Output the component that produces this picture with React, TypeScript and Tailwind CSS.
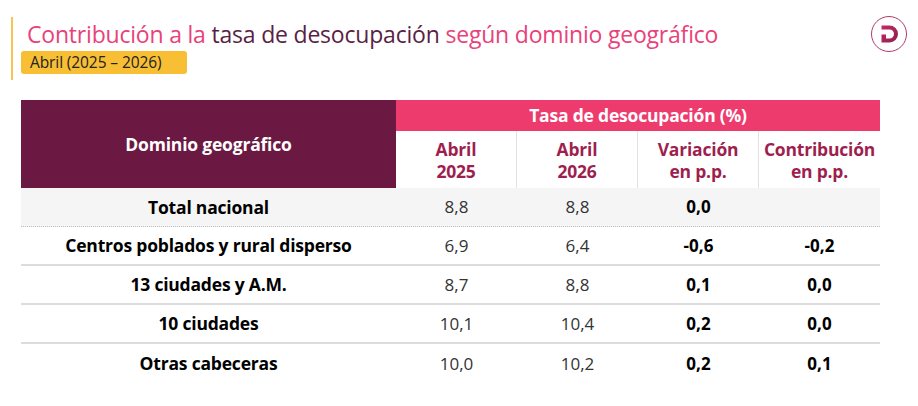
const rows = [
  { label: "Total nacional", a: "8,8", b: "8,8", v: "0,0", c: "", shade: true, border: "border-b border-dotted border-[#bdbdbd]" },
  { label: "Centros poblados y rural disperso", a: "6,9", b: "6,4", v: "-0,6", c: "-0,2", shade: false, border: "border-b-2 border-[#dcdcdc]" },
  { label: "13 ciudades y A.M.", a: "8,7", b: "8,8", v: "0,1", c: "0,0", shade: false, border: "border-b-2 border-[#dcdcdc]" },
  { label: "10 ciudades", a: "10,1", b: "10,4", v: "0,2", c: "0,0", shade: false, border: "border-b-2 border-[#dcdcdc]" },
  { label: "Otras cabeceras", a: "10,0", b: "10,2", v: "0,2", c: "0,1", shade: false, border: "" },
];

function Logo() {
  return (
    <svg width="38" height="38" viewBox="0 0 38 38">
      <defs>
        <linearGradient id="dg" x1="0" y1="0" x2="1" y2="1">
          <stop offset="0" stopColor="#c42a63" />
          <stop offset="1" stopColor="#8e1f52" />
        </linearGradient>
      </defs>
      <circle cx="19" cy="19" r="17.5" fill="white" stroke="#b23a6e" strokeWidth="1" />
      <path
        d="M11.5 10.5 H19.5 A8.5 8.5 0 0 1 19.5 27.5 H11.5 V19.5 H16 V23.5 H19.5 A4.5 4.5 0 0 0 19.5 14.5 H11.5 Z"
        fill="url(#dg)"
      />
    </svg>
  );
}

export default function App() {
  return (
    <div className="w-[918px] h-[406px] bg-white relative" style={{ fontFamily: '"Open Sans", "Noto Sans", sans-serif' }}>
      <div className="flex items-start justify-between pt-[17px] pl-[11px] pr-[10px]">
        <div className="border-l-2 border-[#f6c455] pl-[8px] pb-[6px] pt-[2px]">
          <h1 className="text-[23px] leading-[30px] tracking-[-0.2px] pl-[6px]">
            <span className="text-[#e8427a]">Contribución a la </span>
            <span className="text-[#5a1f45]">tasa de desocupación </span>
            <span className="text-[#e8427a]">según dominio geográfico</span>
          </h1>
          <div className="mt-[2px] inline-block bg-[#f9bf34] rounded-[3px] pl-[9px] h-[23px] w-[166px] text-[15.5px] leading-[23px] tracking-[-0.1px] text-[#222]">
            Abril (2025 – 2026)
          </div>
        </div>
        <div className="mt-[-2px]">
          <Logo />
        </div>
      </div>

      <div className="ml-[21px] mt-[20px] w-[859px]">
        <div className="flex">
          <div className="w-[375px] h-[88px] bg-[#6b1942] text-white font-bold text-[17.5px] tracking-[-0.2px] flex items-center justify-center">
            Dominio geográfico
          </div>
          <div className="flex-1 flex flex-col">
            <div className="h-[31px] bg-[#ee3b6e] text-white font-bold text-[17.5px] tracking-[-0.2px] flex items-center justify-center">
              Tasa de desocupación (%)
            </div>
            <div className="flex h-[57px] text-[#9e1f4f] font-bold text-[17.5px] leading-[22px] tracking-[-0.2px]">
              <div className="w-[121px] flex items-center justify-center text-center border-r border-[#e2e2e2]">Abril<br />2025</div>
              <div className="w-[121px] flex items-center justify-center text-center border-r border-[#e2e2e2]">Abril<br />2026</div>
              <div className="w-[121px] flex items-center justify-center text-center border-r border-[#e2e2e2]">Variación<br />en p.p.</div>
              <div className="flex-1 flex items-center justify-center text-center">Contribución<br />en p.p.</div>
            </div>
          </div>
        </div>
        {rows.map((r) => (
          <div key={r.label} className={`flex h-[39px] items-center text-[17px] ${r.shade ? "bg-[#f5f5f5]" : ""} ${r.border}`}>
            <div className="w-[375px] text-center font-bold text-black tracking-[-0.2px] text-[17.5px]">{r.label}</div>
            <div className="w-[121px] text-center text-[#333]">{r.a}</div>
            <div className="w-[121px] text-center text-[#333]">{r.b}</div>
            <div className="w-[121px] text-center font-bold text-black">{r.v}</div>
            <div className="flex-1 text-center font-bold text-black">{r.c}</div>
          </div>
        ))}
      </div>
    </div>
  );
}
